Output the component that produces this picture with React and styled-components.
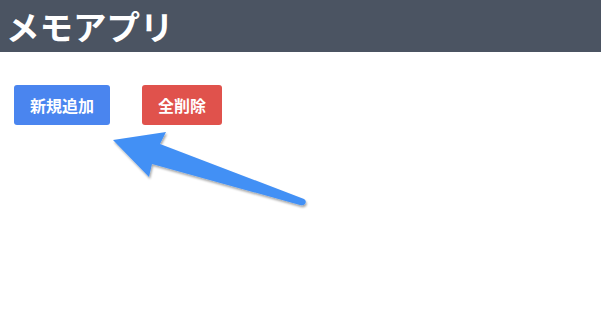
import React from "react";
import styled, { createGlobalStyle } from "styled-components";

const Global = createGlobalStyle`
  html, body { margin: 0; padding: 0; background: #fff; }
  body { font-family: "Noto Sans CJK JP", "Noto Sans", sans-serif; }
`;

const Page = styled.div`
  position: relative;
  width: 601px;
  height: 322px;
  overflow: hidden;
`;

const Header = styled.header`
  height: 52px;
  background: #4b5462;
  display: flex;
  align-items: center;
  padding: 0 6px;
`;

const Title = styled.h1`
  margin: 0;
  color: #fff;
  font-size: 33.5px;
  font-weight: 700;
  line-height: 1;
  letter-spacing: 0;
`;

const Toolbar = styled.div`
  display: flex;
  gap: 32px;
  padding: 33px 14px 0;
`;

const Button = styled.button`
  height: 40px;
  padding: 0 16px;
  border: none;
  border-radius: 3px;
  background: ${(p) => (p.$variant === "danger" ? "#e0524c" : "#4a85ef")};
  color: #fff;
  font-family: "Noto Sans CJK JP", sans-serif;
  font-size: 16px;
  font-weight: 700;
  cursor: pointer;
`;

const Arrow = styled.svg`
  position: absolute;
  left: 0;
  top: 0;
  pointer-events: none;
`;

export default function App() {
  return (
    <Page>
      <Global />
      <Header>
        <Title>メモアプリ</Title>
      </Header>
      <Toolbar>
        <Button>新規追加</Button>
        <Button $variant="danger">全削除</Button>
      </Toolbar>
      <Arrow width="601" height="322" viewBox="0 0 601 322">
        <defs>
          <filter id="sh" x="-20%" y="-20%" width="140%" height="140%">
            <feDropShadow dx="1" dy="2" stdDeviation="1.2" floodColor="#000" floodOpacity="0.35" />
          </filter>
        </defs>
        <path
          filter="url(#sh)"
          fill="#4390f5"
          d="M113 140 L166 132 L160 144 L304 199 Q307 201 305 204 Q303 206 300 205 L152 164 L149 177 Z"
        />
      </Arrow>
    </Page>
  );
}
